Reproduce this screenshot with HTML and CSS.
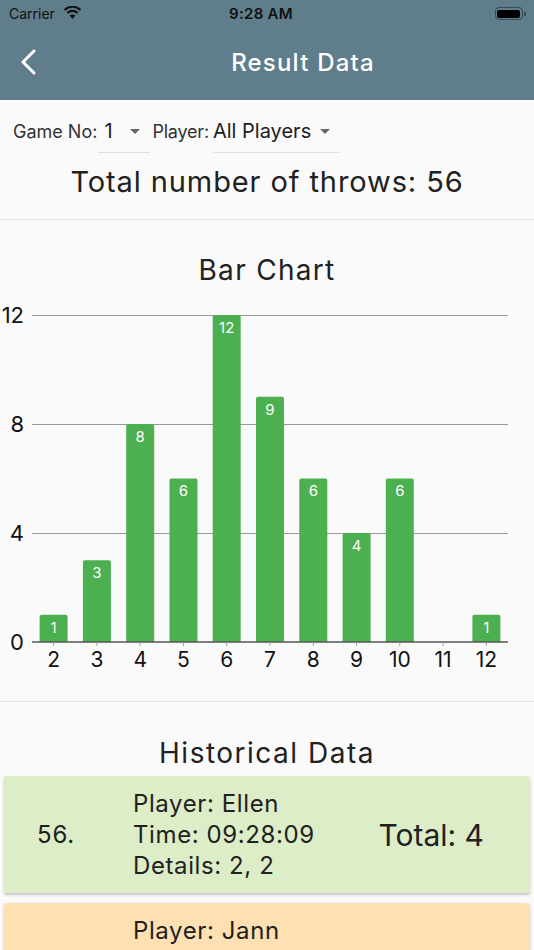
FILE: index.html
```html
<!DOCTYPE html>
<html lang="en">

<head>
    <meta charset="UTF-8">
    <title>Result Data</title>
    <link rel="stylesheet" href="styles.css">
</head>

<body>
    <div class="app_bar">
        <div class="status_bar">
            <div class="status_left">
                <span>Carrier</span>
                <svg class="wifi" width="19" height="13" viewBox="0 0 19 13">
                    <path d="M9.5 13 L6.6 9.6 A4.6 4.6 0 0 1 12.4 9.6 Z" fill="#111"/>
                    <path d="M4.3 7 A7.6 7.6 0 0 1 14.7 7" stroke="#111" stroke-width="2.2" fill="none"/>
                    <path d="M1.5 4 A11.5 11.5 0 0 1 17.5 4" stroke="#111" stroke-width="2.2" fill="none"/>
                </svg>
            </div>
            <span class="clock">9:28 AM</span>
            <div class="status_right">
                <span class="battery"><span class="battery_level"></span></span>
                <span class="battery_nub"></span>
            </div>
        </div>
        <div class="toolbar">
            <svg class="back" width="16" height="26" viewBox="0 0 16 26">
                <path d="M14 2 L3 13 L14 24" stroke="#fff" stroke-width="3" fill="none" stroke-linecap="round" stroke-linejoin="round"/>
            </svg>
            <h1 class="title">Result Data</h1>
        </div>
    </div>

    <div class="filters">
        <span class="filter_label">Game No:</span>
        <span class="dropdown dropdown_game">
            <span class="dropdown_value">1</span>
            <span class="dropdown_arrow"></span>
        </span>
        <span class="filter_label filter_label_player">Player:</span>
        <span class="dropdown">
            <span class="dropdown_value">All Players</span>
            <span class="dropdown_arrow"></span>
        </span>
    </div>
    <div class="total">Total number of throws: 56</div>

    <div class="section chart_section">
        <h2 class="section_title">Bar Chart</h2>
        <svg class="chart" width="534" height="390" viewBox="0 0 534 390">
            <g stroke="#999" stroke-width="1" shape-rendering="crispEdges">
                <line x1="32" y1="25.5" x2="508" y2="25.5"/>
                <line x1="32" y1="134.5" x2="508" y2="134.5"/>
                <line x1="32" y1="243.5" x2="508" y2="243.5"/>
            </g>
            <g class="y_labels" text-anchor="end">
                <text x="24" y="33">12</text>
                <text x="24" y="142">8</text>
                <text x="24" y="251">4</text>
                <text x="24" y="360">0</text>
            </g>
            <g fill="#4caf50">
                <path d="M39.6 352 V326.8 Q39.6 324.8 41.6 324.8 H65.6 Q67.6 324.8 67.6 326.8 V352 Z"/>
                <path d="M82.9 352 V272.3 Q82.9 270.3 84.9 270.3 H108.9 Q110.9 270.3 110.9 272.3 V352 Z"/>
                <path d="M126.2 352 V136 Q126.2 134 128.2 134 H152.2 Q154.2 134 154.2 136 V352 Z"/>
                <path d="M169.5 352 V190.5 Q169.5 188.5 171.5 188.5 H195.5 Q197.5 188.5 197.5 190.5 V352 Z"/>
                <path d="M212.7 352 V27 Q212.7 25 214.7 25 H238.7 Q240.7 25 240.7 27 V352 Z"/>
                <path d="M256 352 V108.8 Q256 106.8 258 106.8 H282 Q284 106.8 284 108.8 V352 Z"/>
                <path d="M299.3 352 V190.5 Q299.3 188.5 301.3 188.5 H325.3 Q327.3 188.5 327.3 190.5 V352 Z"/>
                <path d="M342.6 352 V245 Q342.6 243 344.6 243 H368.6 Q370.6 243 370.6 245 V352 Z"/>
                <path d="M385.8 352 V190.5 Q385.8 188.5 387.8 188.5 H411.8 Q413.8 188.5 413.8 190.5 V352 Z"/>
                <path d="M472.4 352 V326.8 Q472.4 324.8 474.4 324.8 H498.4 Q500.4 324.8 500.4 326.8 V352 Z"/>
            </g>
            <g class="bar_values" text-anchor="middle">
                <text x="53.6" y="343">1</text>
                <text x="96.9" y="288">3</text>
                <text x="140.2" y="152">8</text>
                <text x="183.5" y="206">6</text>
                <text x="226.7" y="43">12</text>
                <text x="270" y="125">9</text>
                <text x="313.3" y="206">6</text>
                <text x="356.6" y="261">4</text>
                <text x="399.8" y="206">6</text>
                <text x="486.4" y="343">1</text>
            </g>
            <line x1="32" y1="352" x2="508" y2="352" stroke="#555" stroke-width="1.5"/>
            <g stroke="#9e9e9e" stroke-width="1">
                <line x1="53.6" y1="352" x2="53.6" y2="356"/>
                <line x1="96.9" y1="352" x2="96.9" y2="356"/>
                <line x1="140.2" y1="352" x2="140.2" y2="356"/>
                <line x1="183.5" y1="352" x2="183.5" y2="356"/>
                <line x1="226.7" y1="352" x2="226.7" y2="356"/>
                <line x1="270" y1="352" x2="270" y2="356"/>
                <line x1="313.3" y1="352" x2="313.3" y2="356"/>
                <line x1="356.6" y1="352" x2="356.6" y2="356"/>
                <line x1="399.8" y1="352" x2="399.8" y2="356"/>
                <line x1="443.1" y1="352" x2="443.1" y2="356"/>
                <line x1="486.4" y1="352" x2="486.4" y2="356"/>
            </g>
            <g class="x_labels" text-anchor="middle">
                <text x="53.6" y="377">2</text>
                <text x="96.9" y="377">3</text>
                <text x="140.2" y="377">4</text>
                <text x="183.5" y="377">5</text>
                <text x="226.7" y="377">6</text>
                <text x="270" y="377">7</text>
                <text x="313.3" y="377">8</text>
                <text x="356.6" y="377">9</text>
                <text x="399.8" y="377">10</text>
                <text x="443.1" y="377">11</text>
                <text x="486.4" y="377">12</text>
            </g>
        </svg>
    </div>

    <div class="section history_section">
        <h2 class="section_title history_title">Historical Data</h2>
        <div class="card card_green">
            <span class="card_no">56.</span>
            <div class="card_info">
                <div>Player: Ellen</div>
                <div>Time: 09:28:09</div>
                <div>Details: 2, 2</div>
            </div>
            <span class="card_total">Total: 4</span>
        </div>
        <div class="card card_orange">
            <span class="card_no">55.</span>
            <div class="card_info">
                <div>Player: Jann</div>
                <div>Time: 09:28:05</div>
                <div>Details: 4, 3</div>
            </div>
            <span class="card_total">Total: 7</span>
        </div>
    </div>
</body>

</html>
```

FILE: styles.css
```css
* {
    margin: 0;
    padding: 0;
    box-sizing: border-box;
}

body {
    width: 534px;
    height: 950px;
    overflow: hidden;
    background: #fafafa;
    font-family: Inter, "Noto Sans", sans-serif;
    color: #212121;
}

.app_bar {
    background: #607d8b;
}

.status_bar {
    height: 27px;
    display: flex;
    align-items: center;
    justify-content: space-between;
    padding: 0 8px 0 9px;
    font-size: 14px;
    color: #111;
}

.status_left {
    display: flex;
    align-items: center;
    gap: 8px;
    width: 110px;
}

.wifi {
    margin-top: -2px;
}

.clock {
    font-weight: 600;
    font-size: 15px;
    letter-spacing: 0.3px;
}

.status_right {
    width: 123px;
    display: flex;
    justify-content: flex-end;
    align-items: center;
}

.battery {
    width: 28px;
    height: 13px;
    border: 1.5px solid #3a4a52;
    border-radius: 4px;
    padding: 1.5px;
    display: flex;
}

.battery_level {
    flex: 1;
    background: #000;
    border-radius: 2px;
}

.battery_nub {
    width: 2px;
    height: 4px;
    background: #3a4a52;
    border-radius: 0 1px 1px 0;
    margin-left: 1px;
}

.toolbar {
    height: 73px;
    display: flex;
    align-items: center;
    justify-content: center;
    padding-left: 72px;
    position: relative;
}

.back {
    position: absolute;
    left: 20px;
    top: 22px;
}

.title {
    font-size: 24px;
    font-weight: 500;
    letter-spacing: 1.2px;
    color: #fff;
    margin-top: -2px;
}

.filters {
    display: flex;
    align-items: flex-end;
    padding: 10px 13px 0;
    height: 53px;
}

.filter_label {
    font-size: 18px;
    color: #333;
    line-height: 42px;
    margin-right: 1px;
}

.filter_label_player {
    margin-right: 4px;
    letter-spacing: -0.2px;
}

.dropdown {
    display: flex;
    align-items: center;
    height: 43px;
    padding-right: 3px;
    border-bottom: 1px solid #e0e0e0;
    margin-right: 2px;
}

.dropdown_value {
    font-size: 20px;
}

.dropdown_game .dropdown_value {
    padding-left: 6px;
    width: 23px;
}

.dropdown_arrow {
    width: 24px;
    height: 24px;
    margin-left: 2px;
    position: relative;
}

.dropdown_arrow::after {
    content: "";
    position: absolute;
    left: 7px;
    top: 10px;
    border-left: 5px solid transparent;
    border-right: 5px solid transparent;
    border-top: 5px solid #666;
}

.total {
    text-align: center;
    font-size: 29px;
    letter-spacing: 0.9px;
    line-height: 40px;
    margin-top: 9px;
    padding-bottom: 17px;
    border-bottom: 1px solid #dfe4ea;
}

.section_title {
    text-align: center;
    font-size: 28px;
    font-weight: 400;
    letter-spacing: 1.3px;
    line-height: 40px;
}

.history_title {
    letter-spacing: 1.5px;
}

.chart_section {
    padding-top: 30px;
    padding-bottom: 21px;
    border-bottom: 1px solid #dfe4ea;
}

.chart {
    display: block;
}

.y_labels text {
    font-size: 22px;
    fill: #111;
}

.x_labels text {
    font-size: 21px;
    fill: #111;
}

.bar_values text {
    font-size: 15px;
    fill: #fff;
}

.history_section {
    padding: 31px 4px 0;
}

.card {
    display: flex;
    align-items: center;
    margin-top: 3px;
    margin-bottom: 10px;
    padding: 12px 46px 12px 33px;
    height: 117px;
    box-shadow: 0 2px 3px rgba(0, 0, 0, 0.22);
    border-radius: 2px;
}

.card_green {
    background: #dcedc8;
}

.card_orange {
    background: #ffe0b2;
}

.card_no {
    width: 96px;
    font-size: 24px;
    letter-spacing: 0.8px;
}

.card_info {
    font-size: 24px;
    letter-spacing: 0.6px;
    line-height: 31px;
}

.card_total {
    margin-left: auto;
    font-size: 30px;
}
```
